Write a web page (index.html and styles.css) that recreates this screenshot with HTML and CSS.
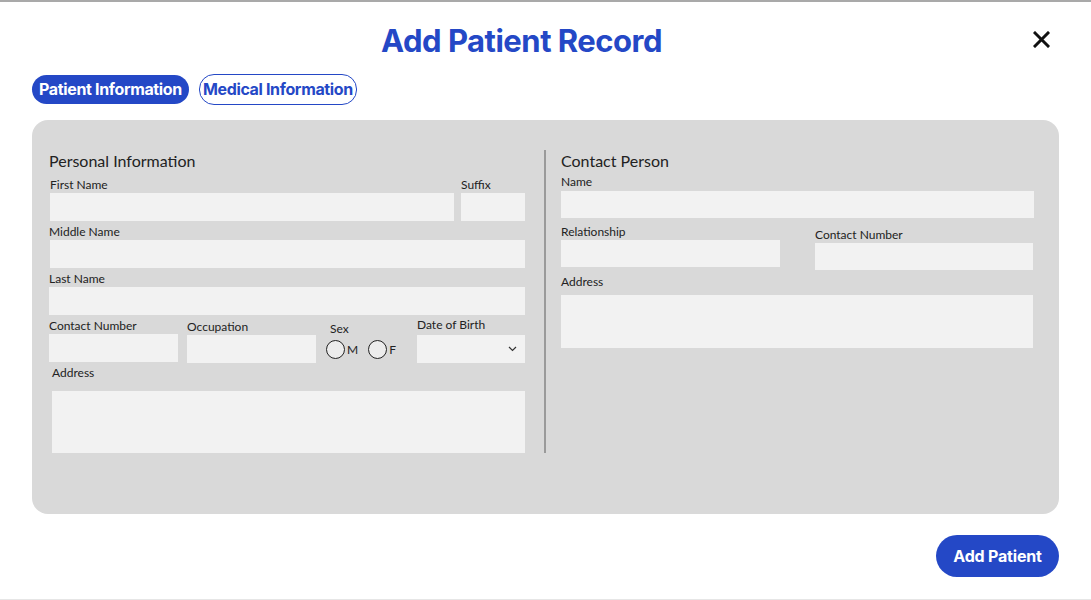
FILE: index.html
```html
<!DOCTYPE html>
<html>
<head>
<meta charset="utf-8">
<link rel="stylesheet" href="styles.css">
</head>
<body>
<div class="page">
  <header class="header">
    <h1 class="title">Add Patient Record</h1>
    <button class="close" aria-label="Close">
      <svg width="17" height="17" viewBox="0 0 17 17"><path d="M2 2 L15 15 M15 2 L2 15" stroke="#111" stroke-width="3" stroke-linecap="square" fill="none"/></svg>
    </button>
  </header>

  <nav class="tabs">
    <span class="tab tab-active">Patient Information</span>
    <span class="tab tab-outline">Medical Information</span>
  </nav>

  <section class="panel">
    <div class="col col-left">
      <h2 class="heading">Personal Information</h2>
      <div class="row row-first">
        <div class="field f-first"><label>First Name</label><div class="input"></div></div>
        <div class="field f-suffix"><label>Suffix</label><div class="input"></div></div>
      </div>
      <div class="field f-middle"><label>Middle Name</label><div class="input"></div></div>
      <div class="field f-last"><label>Last Name</label><div class="input"></div></div>
      <div class="row row-misc">
        <div class="field f-contact"><label>Contact Number</label><div class="input"></div></div>
        <div class="field f-occ"><label>Occupation</label><div class="input"></div></div>
        <div class="field f-sex"><label>Sex</label>
          <div class="radios">
            <span class="radio"></span><span class="rlabel">M</span>
            <span class="radio radio-f"></span><span class="rlabel">F</span>
          </div>
        </div>
        <div class="field f-dob"><label>Date of Birth</label>
          <div class="input select">
            <svg width="9" height="6" viewBox="0 0 9 6"><path d="M1 1 L4.5 4.5 L8 1" stroke="#333" stroke-width="1.2" fill="none"/></svg>
          </div>
        </div>
      </div>
      <div class="field f-addr"><label>Address</label><div class="input textarea"></div></div>
    </div>

    <div class="divider"></div>

    <div class="col col-right">
      <h2 class="heading">Contact Person</h2>
      <div class="field f-name"><label>Name</label><div class="input"></div></div>
      <div class="row row-rel">
        <div class="field f-rel"><label>Relationship</label><div class="input"></div></div>
        <div class="field f-cnum"><label>Contact Number</label><div class="input"></div></div>
      </div>
      <div class="field f-caddr"><label>Address</label><div class="input textarea2"></div></div>
    </div>
  </section>

  <div class="actions">
    <button class="submit">Add Patient</button>
  </div>
</div>
</body>
</html>
```

FILE: styles.css
```css
* { box-sizing: border-box; }
html, body { margin: 0; padding: 0; background: #fff; }
body {
  border-top: 2px solid #a9a9a9;
  font-family: "Lato", "Noto Sans", sans-serif;
  color: #222;
}
.page {
  height: 598px;
  border-bottom: 1px solid #e6e6e6;
  padding: 0 32px;
}
.header {
  display: flex;
  align-items: center;
  height: 78px;
  padding-top: 2px;
}
.title {
  flex: 1;
  margin: 0;
  text-align: center;
  font-family: "Inter", sans-serif;
  font-weight: 700;
  font-size: 31px;
  letter-spacing: -0.5px;
  color: #2448c6;
  padding-bottom: 4px;
}
.close {
  width: 48px;
  height: 30px;
  border: 0;
  background: none;
  padding: 0 9px 0 0;
  display: flex;
  justify-content: flex-end;
  align-items: center;
  margin-bottom: 6px;
}
.tabs {
  display: flex;
  gap: 10px;
  align-items: center;
  height: 30px;
  margin-top: -6px;
}
.tab {
  font-family: "Inter", sans-serif;
  font-weight: 700;
  font-size: 16px;
  letter-spacing: -0.35px;
  border-radius: 15px;
  line-height: 1;
  display: flex;
  align-items: center;
}
.tab-active {
  background: #2448c6;
  color: #fff;
  height: 29px;
  padding: 0 7px;
}
.tab-outline {
  border: 1px solid #2448c6;
  color: #2448c6;
  height: 31px;
  padding: 0 3px;
}
.panel {
  margin-top: 16px;
  background: #d9d9d9;
  border-radius: 16px;
  height: 394px;
  display: flex;
  padding: 30px 25px 0 17px;
}
.col-left { width: 476px; }
.col-right { flex: 1; }
.divider {
  width: 2px;
  height: 303px;
  background: #9a9a9a;
  margin: 0 15px 0 19px;
}
.heading {
  margin: 0;
  font-weight: 400;
  font-size: 16px;
  line-height: 18px;
  margin-top: 2px;
  color: #222;
}
label {
  display: block;
  font-size: 12px;
  line-height: 13px;
  color: #222;
}
.input {
  background: #f2f2f2;
  height: 28px;
}
.row { display: flex; }
.row-first { gap: 7px; margin-top: 8px; }
.f-first { width: 404px; margin-left: 1px; }
.f-first label { margin-bottom: 2px; }
.f-suffix { width: 64px; }
.f-suffix label { margin-bottom: 2px; }
.f-middle { margin-top: 4px; margin-left: 1px; }
.f-middle label { margin-bottom: 2px; margin-left: -1px; }
.f-last { margin-top: 4px; }
.f-last label { margin-bottom: 2px; }
.row-misc { margin-top: 4px; align-items: flex-start; }
.f-contact { width: 129px; }
.f-contact label { margin-bottom: 2px; }
.f-occ { width: 129px; margin-left: 9px; margin-top: 1px; }
.f-occ label { margin-bottom: 2px; }
.f-sex { width: 91px; margin-left: 10px; margin-top: 3px; }
.f-sex label { margin-left: 4px; margin-bottom: 5px; }
.radios { display: flex; align-items: center; }
.radio {
  width: 19px; height: 19px;
  border: 1.5px solid #222;
  border-radius: 50%;
  background: #ececec;
}
.radio-f { margin-left: 10px; }
.rlabel { font-size: 12px; margin-left: 2px; }
.f-dob { width: 108px; margin-top: -1px; }
.f-dob label { margin-bottom: 4px; }
.select {
  display: flex;
  justify-content: flex-end;
  align-items: center;
  padding-right: 8px;
}
.f-addr { margin-top: 3px; margin-left: 3px; }
.f-addr label { margin-bottom: 12px; }
.textarea { height: 62px; }
.f-name { margin-top: 5px; }
.f-name label { margin-bottom: 3px; }
.f-name .input { height: 27px; }
.row-rel { gap: 35px; margin-top: 7px; }
.f-rel { width: 219px; }
.f-rel label { margin-bottom: 2px; }
.f-rel .input { height: 27px; }
.f-cnum { width: 218px; margin-top: 3px; }
.f-cnum label { margin-bottom: 2px; }
.f-cnum .input { height: 27px; }
.f-caddr { margin-top: 5px; }
.f-caddr label { margin-bottom: 7px; }
.textarea2 { height: 53px; margin-right: 1px; }
.actions {
  display: flex;
  justify-content: flex-end;
  margin-top: 21px;
}
.submit {
  background: #2448c6;
  color: #fff;
  border: 0;
  border-radius: 21px;
  height: 42px;
  width: 123px;
  font-family: "Inter", sans-serif;
  font-weight: 700;
  font-size: 16px;
  letter-spacing: -0.2px;
}
```
